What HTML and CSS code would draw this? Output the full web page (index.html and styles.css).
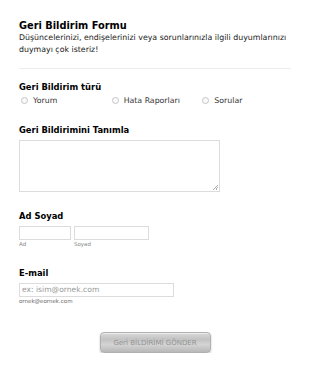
FILE: index.html
```html
<!DOCTYPE html>
<html lang="tr">
<head>
<meta charset="utf-8">
<link rel="stylesheet" href="styles.css">
</head>
<body>
<form class="form">
  <header class="head">
    <h1 class="title">Geri Bildirim Formu</h1>
    <p class="desc">Düşüncelerinizi, endişelerinizi veya sorunlarınızla ilgili duyumlarınızı duymayı çok isteriz!</p>
  </header>
  <hr class="divider">
  <section class="field field-first">
    <div class="label">Geri Bildirim türü</div>
    <div class="radios">
      <label class="radio"><span class="dot"></span>Yorum</label>
      <label class="radio"><span class="dot"></span>Hata Raporları</label>
      <label class="radio"><span class="dot"></span>Sorular</label>
    </div>
  </section>
  <section class="field">
    <div class="label">Geri Bildirimini Tanımla</div>
    <div class="textarea"><span class="grip"></span></div>
  </section>
  <section class="field">
    <div class="label">Ad Soyad</div>
    <div class="names">
      <div class="name">
        <div class="input input-first"></div>
        <div class="sub">Ad</div>
      </div>
      <div class="name">
        <div class="input input-last"></div>
        <div class="sub">Soyad</div>
      </div>
    </div>
  </section>
  <section class="field">
    <div class="label">E-mail</div>
    <div class="input input-email">ex: isim@ornek.com</div>
    <div class="sub sub-dark">ornek@eornek.com</div>
  </section>
  <div class="actions">
    <button type="button" class="submit">Gerİ BİLDİRİMİ GÖNDER</button>
  </div>
</form>
</body>
</html>
```

FILE: styles.css
```css
* { box-sizing: border-box; }
html, body { margin: 0; padding: 0; background: #fff; }
body {
  font-family: "DejaVu Sans", Verdana, sans-serif;
  color: #111;
}
.form {
  width: 310px;
  padding: 20px 19px 0 19px;
}
.title {
  margin: 0;
  font-size: 9.8px;
  line-height: 12px;
  font-weight: bold;
  color: #000;
}
.desc {
  margin: 0;
  font-size: 7.85px;
  line-height: 12px;
  color: #222;
}
.divider {
  margin: 12px 0 0 0;
  border: 0;
  border-top: 1px solid #ececec;
  height: 0;
}
.field { margin-top: 18px; }
.field-first { margin-top: 12px; }
.label {
  font-size: 8.4px;
  line-height: 12px;
  font-weight: bold;
  color: #000;
}
.radios {
  display: flex;
  height: 12px;
  align-items: center;
  margin-top: 1px;
}
.radio {
  display: flex;
  align-items: center;
  width: 91px;
  font-size: 7.8px;
  color: #333;
}
.dot {
  width: 7px;
  height: 7px;
  border: 1px solid #c4c4c4;
  border-radius: 50%;
  margin: 0 5px 0 2px;
  background: #fafafa;
}
.textarea {
  position: relative;
  margin-top: 4px;
  width: 201px;
  height: 52px;
  border: 1px solid #dcdcdc;
  background: #fff;
}
.grip {
  position: absolute;
  right: 1px;
  bottom: 1px;
  width: 5px;
  height: 5px;
  background: linear-gradient(135deg, transparent 45%, #aaa 45%, #aaa 55%, transparent 55%, transparent 70%, #aaa 70%, #aaa 80%, transparent 80%);
}
.names {
  display: flex;
  gap: 3px;
  margin-top: 4px;
}
.input {
  height: 14px;
  border: 1px solid #dcdcdc;
  background: #fff;
}
.input-first { width: 52px; }
.input-last { width: 75px; }
.sub {
  font-size: 5.5px;
  line-height: 9px;
  color: #888;
}
.sub-dark { color: #666; }
.input-email {
  margin-top: 4px;
  width: 155px;
  font-size: 7.6px;
  line-height: 12px;
  padding-left: 2px;
  color: #999;
}
.actions {
  display: flex;
  justify-content: center;
  margin-top: 26px;
}
.submit {
  width: 111px;
  height: 21px;
  border: 1px solid #b0b0b0;
  border-radius: 4px;
  font-family: "DejaVu Sans", Verdana, sans-serif;
  font-size: 7px;
  color: #939393;
  background: linear-gradient(#d8d8d8, #c2c2c2 35%, #d4d4d4 60%, #b8b8b8);
  box-shadow: 0 1px 2px rgba(0,0,0,0.25), inset 0 1px 0 rgba(255,255,255,0.5);
  padding: 0;
}
```
